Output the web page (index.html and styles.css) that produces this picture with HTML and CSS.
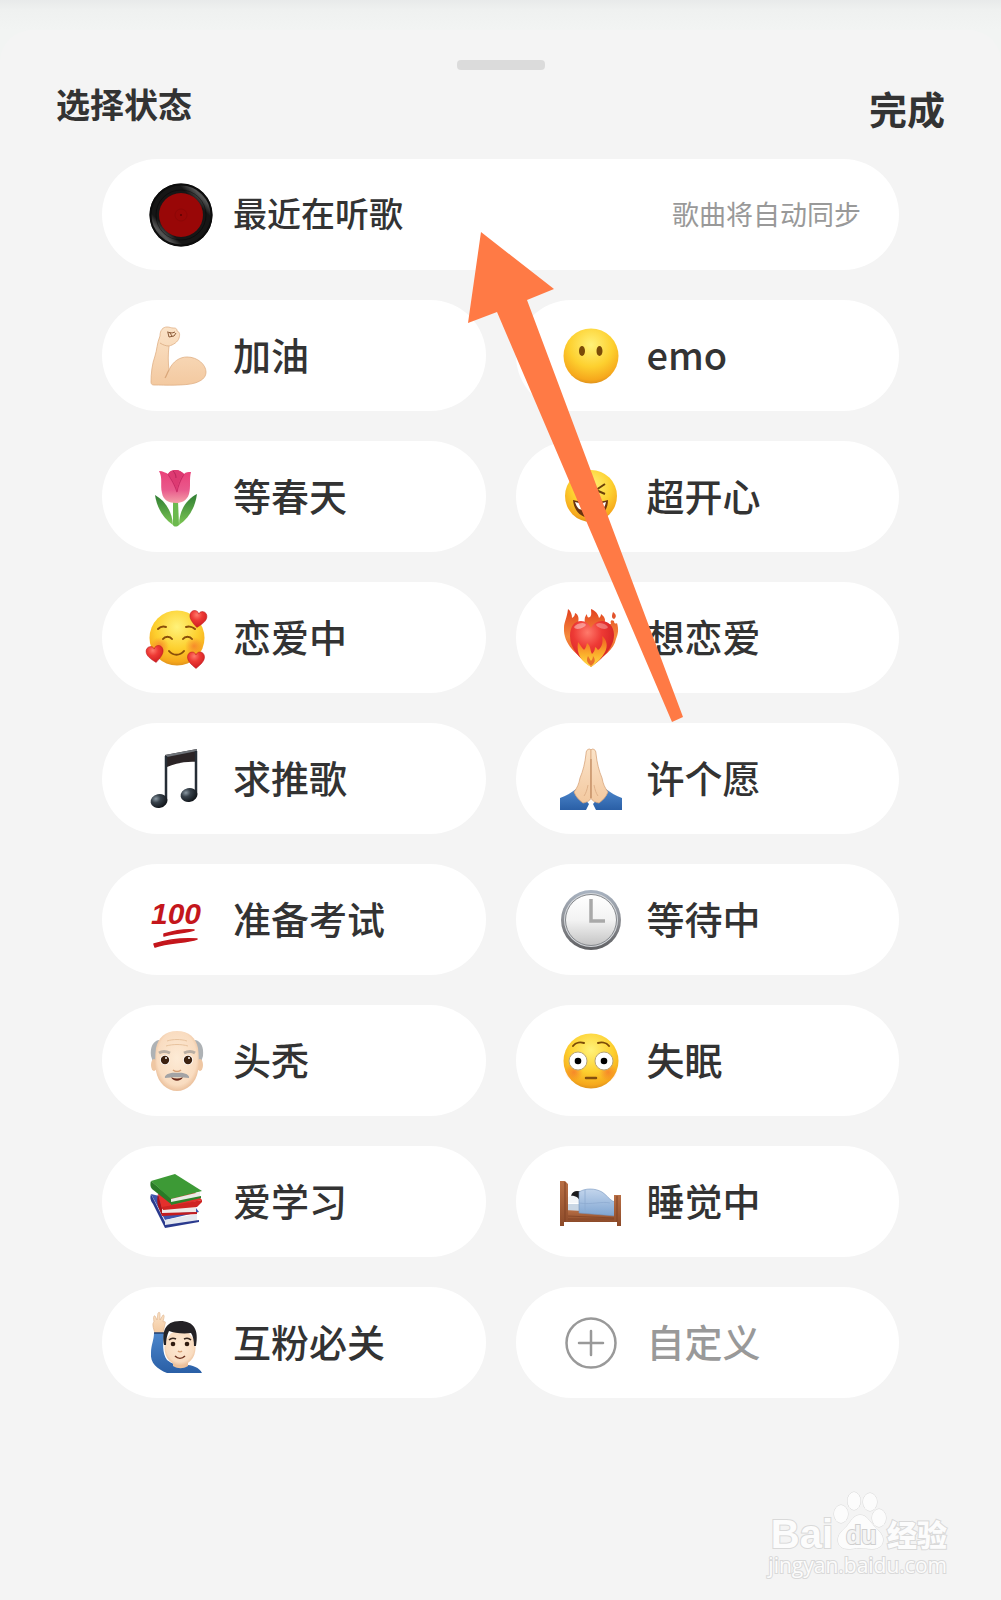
FILE: index.html
```html
<!DOCTYPE html>
<html lang="zh-CN">
<head>
    <meta charset="UTF-8">
    <meta name="viewport" content="width=device-width, initial-scale=1.0">
    <title>选择状态</title>
    <link rel="stylesheet" href="styles.css">
</head>
<body>
    <!-- Shared gradients and shapes -->
    <svg class="defs" width="0" height="0" aria-hidden="true">
        <defs>
            <radialGradient id="face" cx="50%" cy="30%" r="72%">
                <stop offset="0" stop-color="#fff27a"/>
                <stop offset="0.55" stop-color="#fdd02f"/>
                <stop offset="0.88" stop-color="#f6a81c"/>
                <stop offset="1" stop-color="#d98d1c"/>
            </radialGradient>
            <radialGradient id="blush" cx="50%" cy="50%" r="50%">
                <stop offset="0" stop-color="#f5652c" stop-opacity="0.6"/>
                <stop offset="1" stop-color="#f5652c" stop-opacity="0"/>
            </radialGradient>
            <linearGradient id="skin" x1="0" y1="0" x2="0" y2="1">
                <stop offset="0" stop-color="#fbe3c8"/>
                <stop offset="1" stop-color="#f3c9a0"/>
            </linearGradient>
            <radialGradient id="skinFace" cx="50%" cy="45%" r="60%">
                <stop offset="0" stop-color="#fdebd6"/>
                <stop offset="0.75" stop-color="#f9dcc0"/>
                <stop offset="1" stop-color="#e5b48c"/>
            </radialGradient>
            <linearGradient id="sleeve" x1="0" y1="0" x2="0" y2="1">
                <stop offset="0" stop-color="#4c86cb"/>
                <stop offset="1" stop-color="#2a5fa6"/>
            </linearGradient>
            <linearGradient id="vinyl" x1="0" y1="1" x2="1" y2="0">
                <stop offset="0" stop-color="#111"/>
                <stop offset="0.1" stop-color="#222"/>
                <stop offset="0.2" stop-color="#555"/>
                <stop offset="0.28" stop-color="#161616"/>
                <stop offset="0.72" stop-color="#161616"/>
                <stop offset="0.81" stop-color="#555"/>
                <stop offset="0.9" stop-color="#222"/>
                <stop offset="1" stop-color="#111"/>
            </linearGradient>
            <linearGradient id="petal" x1="0" y1="0" x2="0" y2="1">
                <stop offset="0" stop-color="#ea3f78"/>
                <stop offset="0.6" stop-color="#e9598c"/>
                <stop offset="1" stop-color="#f4a0a8"/>
            </linearGradient>
            <linearGradient id="leaf" x1="0" y1="0" x2="0" y2="1">
                <stop offset="0" stop-color="#2f7d33"/>
                <stop offset="1" stop-color="#7cc653"/>
            </linearGradient>
            <radialGradient id="redHeart" cx="40%" cy="25%" r="80%">
                <stop offset="0" stop-color="#ff7a6b"/>
                <stop offset="0.4" stop-color="#ee3a35"/>
                <stop offset="1" stop-color="#c9181e"/>
            </radialGradient>
            <linearGradient id="flame" x1="0" y1="0" x2="0" y2="1">
                <stop offset="0" stop-color="#e2401f"/>
                <stop offset="0.5" stop-color="#f58a3c"/>
                <stop offset="1" stop-color="#e5491f"/>
            </linearGradient>
            <linearGradient id="flameFront" x1="0" y1="0" x2="0" y2="1">
                <stop offset="0" stop-color="#ef5a22"/>
                <stop offset="0.6" stop-color="#fbb02c"/>
                <stop offset="1" stop-color="#ffe04a"/>
            </linearGradient>
            <linearGradient id="rim" x1="0" y1="0" x2="0" y2="1">
                <stop offset="0" stop-color="#a9b4c2"/>
                <stop offset="0.5" stop-color="#8d8f94"/>
                <stop offset="1" stop-color="#5f6063"/>
            </linearGradient>
            <linearGradient id="dial" x1="0" y1="0" x2="0" y2="1">
                <stop offset="0" stop-color="#ffffff"/>
                <stop offset="0.5" stop-color="#f3f3f3"/>
                <stop offset="1" stop-color="#c4c4c4"/>
            </linearGradient>
            <radialGradient id="noteHead" cx="35%" cy="30%" r="70%">
                <stop offset="0" stop-color="#8b99a3"/>
                <stop offset="0.4" stop-color="#37414a"/>
                <stop offset="1" stop-color="#12161b"/>
            </radialGradient>
            <linearGradient id="wood" x1="0" y1="0" x2="0" y2="1">
                <stop offset="0" stop-color="#b86f45"/>
                <stop offset="1" stop-color="#8c4a29"/>
            </linearGradient>
            <linearGradient id="blanket" x1="0" y1="0" x2="0" y2="1">
                <stop offset="0" stop-color="#c3d5ec"/>
                <stop offset="1" stop-color="#7fa5d2"/>
            </linearGradient>
            <path id="heart" d="M0 8.500C-5 4.500 -8.500 1 -8.500 -3C-8.500 -6 -6.500 -8 -4 -8C-2 -8 -.7 -7 0 -5C.7 -7 2 -8 4 -8C6.500 -8 8.500 -6 8.500 -3C8.500 1 5 4.500 0 8.500Z"/>
        </defs>
    </svg>

    <main class="sheet">
        <div class="handle"></div>

        <header class="sheet-header">
            <h1 class="sheet-title">选择状态</h1>
            <button class="done-btn" type="button">完成</button>
        </header>

        <section class="status-grid">
            <button class="pill pill-wide" type="button">
                <svg class="icon" viewBox="0 0 64 64" aria-hidden="true">
                    <circle cx="32" cy="32" r="31.500" fill="url(#vinyl)"/>
                    <circle cx="32" cy="32" r="30.500" fill="none" stroke="#0c0c0c" stroke-width="2"/>
                    <circle cx="32" cy="32" r="25" fill="none" stroke="#000" stroke-opacity=".4"/>
                    <circle cx="32" cy="32" r="22" fill="#990707"/>
                    <circle cx="32" cy="32" r="6" fill="none" stroke="#8a0606" stroke-width=".8"/>
                    <circle cx="32" cy="32" r="1" fill="#5a0303"/>
                </svg>
                <span class="label">最近在听歌</span>
                <span class="hint">歌曲将自动同步</span>
            </button>

            <button class="pill" type="button">
                <svg class="icon" viewBox="0 0 64 64" aria-hidden="true">
                    <path d="M15 12C15 6 18 3 22 3C25 3 26 4 28 4C30 4 32 4 32 7C35 8 35 11 34 14C33 18 28 21 24 22C23 30 23 38 24 46C28 37 35 33 42 33C53 33 61 41 61 48C61 54 56 57 50 59C40 62 20 61 9 61C7 61 6 60 6 58C6 50 7 40 10 32C12 26 12 19 15 12Z" fill="url(#skin)" stroke="#dfb085" stroke-width=".8"/>
                    <path d="M24 46C22 49 22 51 20 54" fill="none" stroke="#d9a679" stroke-width="1.200"/>
                    <path d="M22 8L27 9L30 8M23 9L24 13L29 12L31 9M25 9L27 12" fill="none" stroke="#8a5a38" stroke-width="1"/>
                    <path d="M15 19C18 21 21 22 24 22" fill="none" stroke="#e0b48c" stroke-width="1"/>
                </svg>
                <span class="label">加油</span>
            </button>
            <button class="pill" type="button">
                <svg class="icon" viewBox="0 0 64 64" aria-hidden="true">
                    <circle cx="32" cy="32" r="27.500" fill="url(#face)"/>
                    <ellipse cx="23" cy="27" rx="3" ry="5" fill="#7a4a08"/>
                    <ellipse cx="40.500" cy="27" rx="3" ry="5" fill="#7a4a08"/>
                </svg>
                <span class="label">emo</span>
            </button>

            <button class="pill" type="button">
                <svg class="icon" viewBox="0 0 64 64" aria-hidden="true">
                    <path d="M28 36H33L34 60C32 62 29 62 28 60Z" fill="#6cb94e"/>
                    <path d="M10 30C19 35 27 45 28 60C18 53 12 43 10 30Z" fill="url(#leaf)"/>
                    <path d="M52 29C42 34 34 45 34 60C44 53 50 43 52 29Z" fill="url(#leaf)"/>
                    <path d="M14 6C18 6 21 8 23 9C25 6 28 5 31 5C34 5 37 7 39 9C41 7 43 7 46 7C44 14 46 22 44 29C42 36 36 38 31 38C24 38 18 35 17 28C15 20 18 13 14 6Z" fill="url(#petal)"/>
                    <path d="M23 9C26 14 30 19 32 27C33 20 36 14 39 9" fill="none" stroke="#c92d66" stroke-width="1.200"/>
                    <path d="M23 9C25 5 29 5 31 5C34 5 37 7 39 9C35 13 33 19 32 26C30 19 27 14 23 9Z" fill="#dd3a72"/>
                    <path d="M28 6C30 8 31 10 31 13" fill="none" stroke="#b9245a" stroke-width="1"/>
                </svg>
                <span class="label">等春天</span>
            </button>
            <button class="pill" type="button">
                <svg class="icon" viewBox="0 0 64 64" aria-hidden="true">
                    <circle cx="32" cy="31" r="26" fill="url(#face)"/>
                    <path d="M46 19L37 25L46 29M18 19L27 25L18 29" fill="none" stroke="#6b3f08" stroke-width="2"/>
                    <path d="M14 35C25 38 39 38 49 35C49 46 42 53 32 53C22 53 15 46 14 35Z" fill="#6b3410"/>
                    <path d="M16 37C26 40 38 40 47 37C46 41 45 43 43 44C36 46 27 46 20 44C18 42 17 40 16 37Z" fill="#fff"/>
                </svg>
                <span class="label">超开心</span>
            </button>

            <button class="pill" type="button">
                <svg class="icon" viewBox="0 0 64 64" aria-hidden="true">
                    <circle cx="32" cy="32" r="27.500" fill="url(#face)"/>
                    <circle cx="15" cy="40" r="9" fill="url(#blush)"/>
                    <circle cx="49" cy="40" r="9" fill="url(#blush)"/>
                    <g fill="none" stroke="#8a4f0a" stroke-width="2" stroke-linecap="round">
                        <path d="M13 23C15 21 18 20 21 21M41 21C44 20 48 21 50 23"/>
                        <path d="M18 33C20 30 25 30 27 33M38 33C40 30 45 30 47 33"/>
                        <path d="M24 45C28 50 35 50 39 45"/>
                    </g>
                    <g fill="url(#redHeart)" stroke="#b8141b" stroke-width=".5">
                        <use href="#heart" transform="translate(53 13) rotate(8)"/>
                        <use href="#heart" transform="translate(10 48) rotate(-8)"/>
                        <use href="#heart" transform="translate(51 54)"/>
                    </g>
                </svg>
                <span class="label">恋爱中</span>
            </button>
            <button class="pill" type="button">
                <svg class="icon" viewBox="0 0 64 64" aria-hidden="true">
                    <path d="M32 58C18 50 4 38 5 22C5 16 8 12 9 3C12 5 13 9 13 12C15 11 16 9 16 7C20 9 20 13 19 17H26C25 13 26 10 28 8C28 11 29 12 31 11C33 9 32 6 32 3C37 5 39 8 40 12C41 11 42 10 42 8C46 11 47 14 45 18H52C51 15 52 13 55 15C55 18 57 18 58 17C60 24 59 28 57 33C55 43 45 51 32 58Z" fill="url(#flame)"/>
                    <path d="M54 6C57 8 58 11 55 13C52 12 53 9 54 6Z" fill="#e2532c"/>
                    <path d="M32 61C20 52 11 42 11 30C11 20 16 15 22 15C27 15 30 18 32 22C34 18 38 15 43 15C49 15 55 20 55 29C55 42 43 53 32 61Z" fill="url(#redHeart)"/>
                    <ellipse cx="21" cy="20" rx="6" ry="2.500" fill="#fff" fill-opacity=".4" transform="rotate(-15 21 20)"/>
                    <ellipse cx="43" cy="20" rx="6" ry="2.500" fill="#fff" fill-opacity=".3" transform="rotate(15 43 20)"/>
                    <path d="M32 61C23 56 17 49 19 36C21 38 22 41 24 43C26 45 27 41 28 37C32 40 31 45 33 48C35 46 36 44 36 41C38 42 38 43 39 44C44 41 44 34 43 30C48 34 49 40 46 46C43 52 38 57 32 61Z" fill="url(#flameFront)"/>
                    <path d="M32 60C28 57 27 54 29 50C30 52 31 53 32 55C33 54 34 52 34 50C37 54 36 57 32 60Z" fill="#e9702a"/>
                </svg>
                <span class="label">想恋爱</span>
            </button>

            <button class="pill" type="button">
                <svg class="icon" viewBox="0 0 64 64" aria-hidden="true">
                    <path d="M20 8L52 2V15C43 14 31 16 22 20V54H20Z" fill="#2b2426"/>
                    <path d="M20 8L52 2V4L22 10Z" fill="#6f747a"/>
                    <path d="M21 9V54M51 4V48" stroke="#252d36" stroke-width="2.500"/>
                    <ellipse cx="14" cy="54" rx="8.500" ry="7" fill="url(#noteHead)" transform="rotate(-12 14 54)"/>
                    <ellipse cx="44" cy="48" rx="8.500" ry="7" fill="url(#noteHead)" transform="rotate(-12 44 48)"/>
                </svg>
                <span class="label">求推歌</span>
            </button>
            <button class="pill" type="button">
                <svg class="icon" viewBox="0 0 64 64" aria-hidden="true">
                    <path d="M1 51C7 49 12 46 17 42L30 57L27 63H1Z" fill="url(#sleeve)"/>
                    <path d="M63 51C57 49 52 46 47 42L34 57L37 63H63Z" fill="url(#sleeve)"/>
                    <path d="M31 2C28 2 27 4 27 7C26 16 24 24 21 31C20 37 18 41 15 45C17 50 20 53 24 56C29 55 32 53 32 50V3Z" fill="url(#skin)" stroke="#d8a67c" stroke-width=".8"/>
                    <path d="M33 2C36 2 37 4 37 7C38 16 40 24 43 31C44 37 46 41 49 45C47 50 44 53 40 56C35 55 32 53 32 50V3Z" fill="url(#skin)" stroke="#d8a67c" stroke-width=".8"/>
                    <path d="M32 12V51" fill="none" stroke="#b57e54" stroke-width=".9"/>
                    <path d="M29 38C28 43 27 46 25 49M35 38C36 43 37 46 39 49" fill="none" stroke="#dcae86" stroke-width=".9"/>
                </svg>
                <span class="label">许个愿</span>
            </button>

            <button class="pill" type="button">
                <svg class="icon" viewBox="0 0 64 64" aria-hidden="true">
                    <text class="hundred" x="6" y="36">100</text>
                    <path d="M19 46C29 43 39 41 49 42C41 45 29 45 19 48Z" fill="#c4161c" stroke="#c4161c" stroke-width="1.500" stroke-linejoin="round"/>
                    <path d="M9 56C22 52 38 50 52 51C42 55 24 54 10 59Z" fill="#c4161c" stroke="#c4161c" stroke-width="1.500" stroke-linejoin="round"/>
                </svg>
                <span class="label">准备考试</span>
            </button>
            <button class="pill" type="button">
                <svg class="icon" viewBox="0 0 64 64" aria-hidden="true">
                    <circle cx="32" cy="32" r="30" fill="url(#rim)"/>
                    <circle cx="32" cy="32" r="27" fill="#d5d8dc"/>
                    <circle cx="32" cy="32" r="25.500" fill="url(#dial)" stroke="#85888c" stroke-width="1"/>
                    <path d="M32 11V33H46" fill="none" stroke="#a9a9a9" stroke-width="3.500"/>
                </svg>
                <span class="label">等待中</span>
            </button>

            <button class="pill" type="button">
                <svg class="icon" viewBox="0 0 64 64" aria-hidden="true">
                    <path d="M14 11C8 12 5 18 6 27L9 36H15V12ZM50 11C56 12 59 18 58 27L55 36H49V12Z" fill="#aeb2b5"/>
                    <ellipse cx="9" cy="36" rx="3" ry="6" fill="#efc7a3"/>
                    <ellipse cx="55" cy="36" rx="3" ry="6" fill="#efc7a3"/>
                    <path d="M32 2C44 2 51 9 53 19C54 26 54 34 53 42C51 54 42 62 32 62C22 62 13 54 11 42C10 34 10 26 11 19C13 9 20 2 32 2Z" fill="url(#skinFace)"/>
                    <path d="M22 12C28 10 36 10 42 12M21 17C28 15 36 15 43 17" fill="none" stroke="#e8c39e" stroke-width="1"/>
                    <path d="M14 24C17 22 21 22 25 24M39 24C43 22 47 22 50 24" fill="none" stroke="#b9aea3" stroke-width="3"/>
                    <circle cx="20" cy="31" r="5" fill="#fff"/>
                    <circle cx="43" cy="31" r="5" fill="#fff"/>
                    <circle cx="20" cy="31" r="4.200" fill="#3d2210"/>
                    <circle cx="43" cy="31" r="4.200" fill="#3d2210"/>
                    <circle cx="21" cy="29" r="1" fill="#fff"/>
                    <circle cx="44" cy="29" r="1" fill="#fff"/>
                    <path d="M28 41C30 43 34 43 36 41" fill="none" stroke="#d79f74" stroke-width="1.500"/>
                    <path d="M26 48C30 50 34 50 38 48C36 53 28 53 26 48Z" fill="#6b2a1a"/>
                    <path d="M20 49C19 46 25 43 32 44C39 43 45 46 44 49C37 48 27 48 20 49Z" fill="#a3a3a5"/>
                </svg>
                <span class="label">头秃</span>
            </button>
            <button class="pill" type="button">
                <svg class="icon" viewBox="0 0 64 64" aria-hidden="true">
                    <circle cx="32" cy="32" r="27.500" fill="url(#face)"/>
                    <circle cx="15" cy="43" r="9" fill="url(#blush)"/>
                    <circle cx="49" cy="43" r="9" fill="url(#blush)"/>
                    <path d="M14 17C17 13 22 13 25 14M39 14C42 13 47 13 50 17" fill="none" stroke="#7a4a08" stroke-width="2" stroke-linecap="round"/>
                    <circle cx="19" cy="32" r="9" fill="#fff" stroke="#b7a47c"/>
                    <circle cx="45" cy="32" r="9" fill="#fff" stroke="#b7a47c"/>
                    <circle cx="19" cy="32" r="3.300" fill="#000"/>
                    <circle cx="45" cy="32" r="3.300" fill="#000"/>
                    <path d="M27 49H37" stroke="#83500f" stroke-width="2.500" stroke-linecap="round"/>
                </svg>
                <span class="label">失眠</span>
            </button>

            <button class="pill" type="button">
                <svg class="icon" viewBox="0 0 64 64" aria-hidden="true">
                    <path d="M6 24L20 52V58L8 34C5 30 5 27 6 24Z" fill="#2a3a8e"/>
                    <path d="M6 24L20 50L54 42L48 34Z" fill="#3f55ae"/>
                    <path d="M20 50L52 44V51L20 56Z" fill="#e4e8f0"/>
                    <path d="M20 55L54 50V52L20 58Z" fill="#2a3a8e"/>
                    <path d="M13 24L17 38V46L13 36C12 32 12 28 13 24Z" fill="#a81318"/>
                    <path d="M13 24L17 39L57 30L50 22Z" fill="#e4302c"/>
                    <path d="M17 39L51 36V42L17 44Z" fill="#efe9e7"/>
                    <path d="M17 43L52 42V44L17 46Z" fill="#c41c20"/>
                    <path d="M17 37L57 30V32L52 37L18 40Z" fill="#cf2422"/>
                    <path d="M6 11L26 28V34L7 19C5 17 5 13 6 11Z" fill="#2a7a27"/>
                    <path d="M6 11L30 4L57 21L26 29Z" fill="#3d9a36"/>
                    <path d="M26 29L55 22V27L26 33Z" fill="#e9ece6"/>
                    <path d="M26 32L56 26V28L26 35Z" fill="#2d8229"/>
                </svg>
                <span class="label">爱学习</span>
            </button>
            <button class="pill" type="button">
                <svg class="icon" viewBox="0 0 64 64" aria-hidden="true">
                    <rect x="7" y="34" width="16" height="8" fill="#c9d6e4"/>
                    <path d="M6 40L57 43V52H6Z" fill="url(#wood)"/>
                    <path d="M8 46L56 48M8 49H56" stroke="#7d4024" stroke-width=".7"/>
                    <path d="M12 26C13 21 18 20 22 22V30L14 29Z" fill="#1b1b1d"/>
                    <path d="M7 33C7 27 11 25 15 26C19 27 21 30 21 33Z" fill="#f4f6f9"/>
                    <path d="M20 22C26 18 36 18 43 22C49 26 52 32 57 32V46L20 43Z" fill="url(#blanket)" stroke="#7394bd" stroke-width=".6"/>
                    <path d="M26 20V43M20 33C33 35 43 31 51 33" fill="none" stroke="#8eabd0" stroke-width=".8"/>
                    <path d="M1 11H6L9 14V52H5V56H1Z" fill="url(#wood)"/>
                    <path d="M6 12V52" stroke="#814225"/>
                    <path d="M55 25H62V56H58V52H55Z" fill="url(#wood)"/>
                    <path d="M58 26V52" stroke="#814225"/>
                </svg>
                <span class="label">睡觉中</span>
            </button>

            <button class="pill" type="button">
                <svg class="icon" viewBox="0 0 64 64" aria-hidden="true">
                    <path d="M10 22C8 17 7 12 9 11C8 6 9 4 10 5L12 9L13 2C14 1 15 1 15 3V9L18 4C20 4 19 6 18 11C20 10 21 11 20 13L18 22Z" fill="url(#skin)" stroke="#dcae86" stroke-width=".6"/>
                    <path d="M9 22H19C18 32 17 42 22 49C27 53 31 54 35 54C46 53 54 56 57 62H22C12 58 5 52 6 42C6 34 9 29 9 22Z" fill="url(#sleeve)"/>
                    <path d="M9 22H19" stroke="#23406f" stroke-width="1.500"/>
                    <path d="M28 49H43V55C38 58 33 58 28 55Z" fill="#edc19b"/>
                    <ellipse cx="35" cy="37" rx="15.500" ry="17.500" fill="url(#skinFace)"/>
                    <path d="M19 34C17 22 19 10 35 10C49 10 54 19 51 35H49C49 30 48 25 46 22C38 23 29 22 24 20C22 24 21 29 21 34Z" fill="#242226"/>
                    <path d="M24 29C26 27 29 27 31 28M39 28C41 27 44 27 46 29" fill="none" stroke="#38281f" stroke-width="1.500"/>
                    <circle cx="28" cy="33" r="2.300" fill="#2f1c10"/>
                    <circle cx="42" cy="33" r="2.300" fill="#2f1c10"/>
                    <path d="M33 40C34 41 36 41 37 40" fill="none" stroke="#d79f74" stroke-width="1.500"/>
                    <path d="M30 45C33 48 37 48 40 45" fill="none" stroke="#6b2f1c" stroke-width="1.500"/>
                </svg>
                <span class="label">互粉必关</span>
            </button>
            <button class="pill pill-custom" type="button">
                <svg class="icon" viewBox="0 0 64 64" aria-hidden="true">
                    <g fill="none" stroke="#999" stroke-width="2.500" stroke-linecap="round">
                        <circle cx="32" cy="32" r="24.500"/>
                        <path d="M32 20V44M20 32H44"/>
                    </g>
                </svg>
                <span class="label">自定义</span>
            </button>
        </section>

        <footer class="watermark">
            <div class="watermark-logo">
                <span class="watermark-bai">Bai</span>
                <svg class="watermark-paw" viewBox="0 0 54 60" aria-hidden="true">
                    <g fill="#fcfcfc" stroke="#d9d9d9">
                        <ellipse cx="8" cy="23" rx="7" ry="9"/>
                        <ellipse cx="21" cy="10" rx="6.500" ry="9"/>
                        <ellipse cx="37" cy="11" rx="7" ry="9"/>
                        <ellipse cx="46" cy="27" rx="7" ry="9"/>
                        <path d="M27 24C34 24 36 30 41 35C47 41 50 44 50 49C50 55 45 58 39 58C34 58 32 57 27 57C22 57 20 58 16 58C9 58 5 55 5 49C5 43 9 40 14 35C18 30 21 24 27 24Z"/>
                    </g>
                    <text class="watermark-du" x="13" y="53">du</text>
                </svg>
                <span class="watermark-cn">经验</span>
            </div>
            <div class="watermark-url">jingyan.baidu.com</div>
        </footer>

        <!-- Arrow pointing at the music status -->
        <svg class="arrow" viewBox="0 0 218 492" aria-hidden="true">
            <path d="M14 1L87 58L60 69L216 486L205 491L30 81L1 92Z" fill="#ff7a45"/>
        </svg>
    </main>
</body>
</html>
```
FILE: styles.css
```css
* {
    margin: 0;
    padding: 0;
    box-sizing: border-box;
}

body {
    font-family: "Noto Sans CJK SC", "Noto Sans", sans-serif;
    background: linear-gradient(to bottom, #e8eaea 0, #eff1f0 10px, #f2f4f3 30px);
    color: #333;
    min-height: 100vh;
    padding-top: 30px;
}

button {
    font-family: inherit;
    color: inherit;
    border: none;
    background: none;
    cursor: pointer;
}

.defs {
    position: absolute;
}

.sheet {
    position: relative;
    min-height: calc(100vh - 30px);
    background: #f4f4f4;
    border-radius: 32px 32px 0 0;
    padding-top: 30px;
}

.handle {
    width: 88px;
    height: 10px;
    margin: 0 auto;
    border-radius: 4px;
    background: #dbdbdb;
}

.sheet-header {
    display: flex;
    justify-content: space-between;
    align-items: flex-start;
    height: 89px;
    padding: 10px 56px 0;
}

.sheet-title {
    font-size: 34px;
    font-weight: 700;
    line-height: 48px;
}

.done-btn {
    font-size: 38px;
    font-weight: 700;
    line-height: 56px;
}

.status-grid {
    display: grid;
    grid-template-columns: 1fr 1fr;
    gap: 30px;
    padding: 0 102px;
}

.pill {
    display: flex;
    align-items: center;
    gap: 24px;
    height: 111px;
    padding: 0 38px 0 43px;
    border-radius: 56px;
    background: #fff;
    text-align: left;
}

.pill-wide {
    grid-column: 1 / -1;
    gap: 20px;
    padding-left: 47px;
}

.icon {
    width: 64px;
    height: 64px;
    flex-shrink: 0;
}

.label {
    padding-bottom: 3px;
    font-size: 38px;
    font-weight: 500;
    line-height: 56px;
    white-space: nowrap;
}

.pill-wide .label {
    font-size: 34px;
}

.pill-custom .label {
    color: #999;
}

.hint {
    margin-left: auto;
    padding-bottom: 2px;
    font-size: 27px;
    line-height: 40px;
    color: #999;
}

.hundred {
    font-family: "Liberation Sans Narrow", "Liberation Sans", sans-serif;
    font-size: 30px;
    font-style: italic;
    font-weight: 700;
    fill: #c4161c;
}

.watermark {
    display: flex;
    flex-direction: column;
    align-items: flex-end;
    margin-top: 93px;
    padding: 0 54px 20px;
    color: #fcfcfc;
    -webkit-text-stroke: 2px #d9d9d9;
    paint-order: stroke fill;
}

.watermark-logo {
    display: flex;
    align-items: flex-end;
}

.watermark-bai {
    font-family: "Liberation Sans", sans-serif;
    font-size: 40px;
    font-weight: 700;
    line-height: 34px;
}

.watermark-paw {
    width: 54px;
    height: 60px;
}

.watermark-du {
    font-family: "Liberation Sans", sans-serif;
    font-size: 25px;
    font-weight: 700;
    fill: #f4f4f4;
    stroke: #cfcfcf;
    stroke-width: 2px;
}

.watermark-cn {
    font-size: 30px;
    font-weight: 900;
    line-height: 36px;
}

.watermark-url {
    font-family: "Open Sans", "Noto Sans", sans-serif;
    font-size: 21px;
    line-height: 28px;
}

.arrow {
    position: absolute;
    top: 201px;
    left: 50%;
    width: 218px;
    height: 492px;
    margin-left: -34px;
    pointer-events: none;
}
```
